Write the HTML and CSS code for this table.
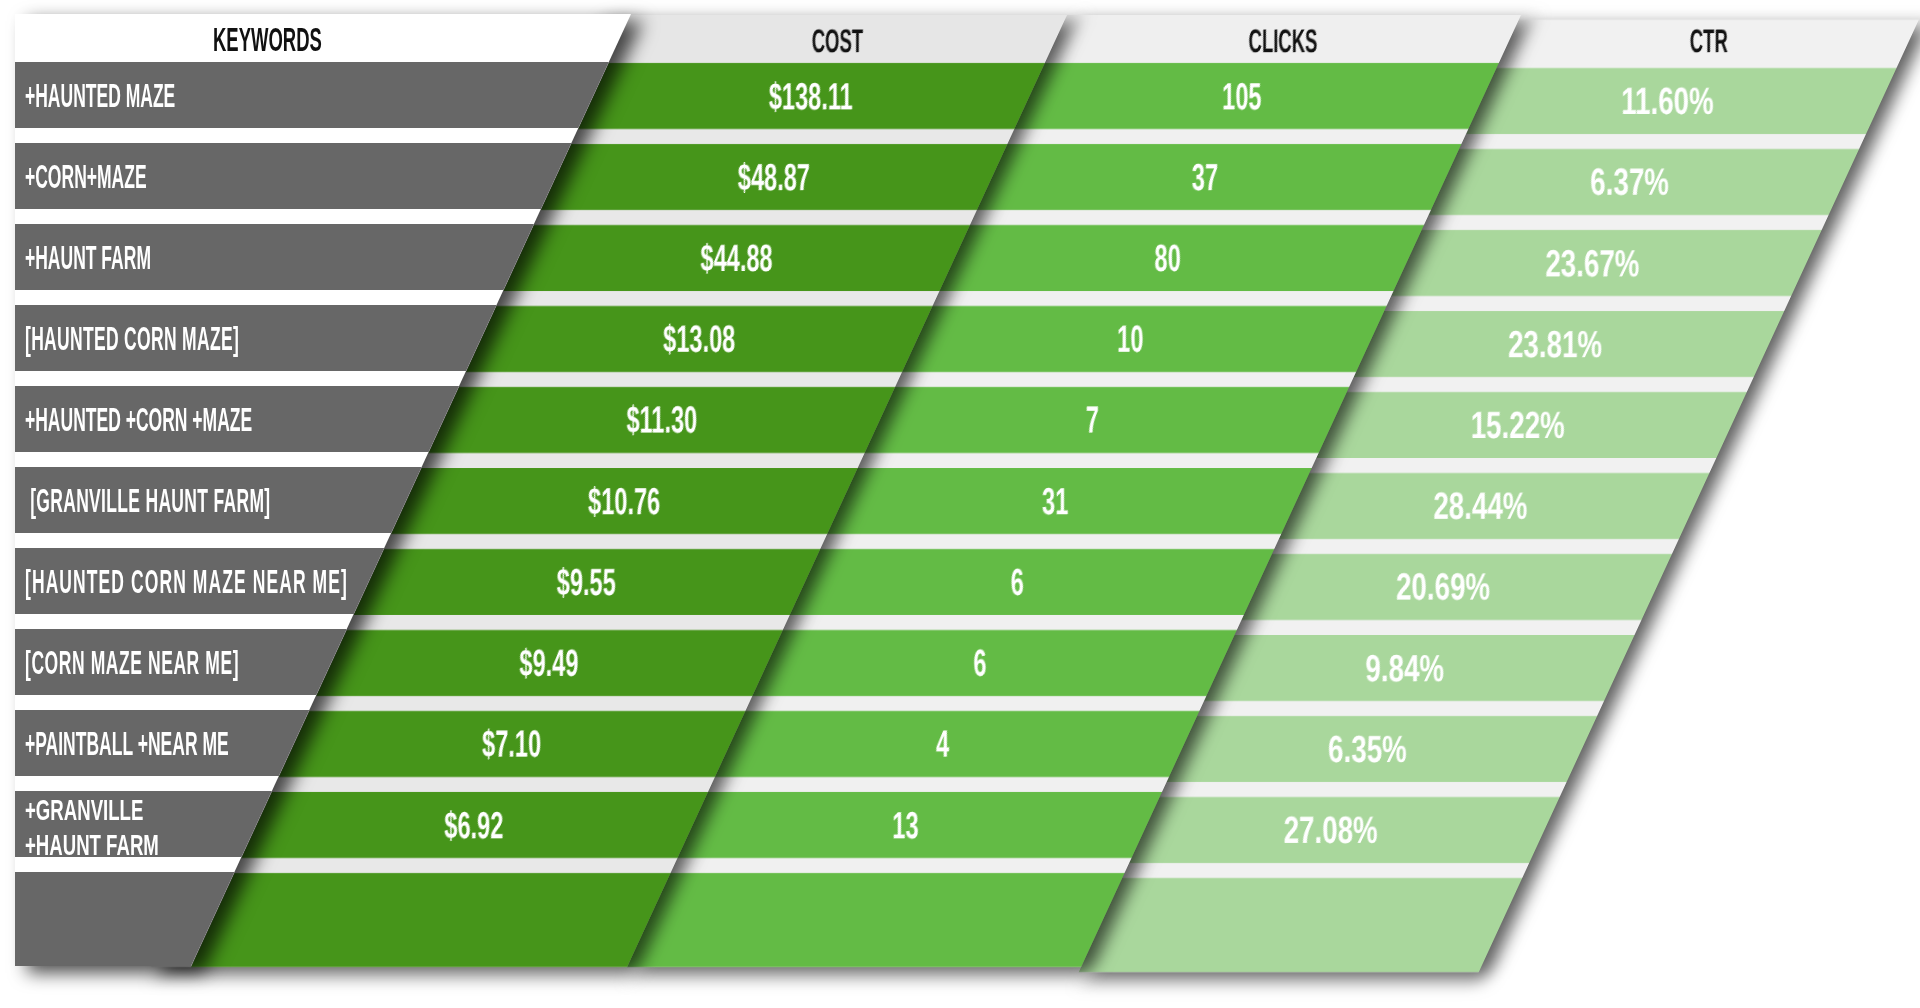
FILE: index.html
```html
<!DOCTYPE html>
<html lang="en">
<head>
<meta charset="utf-8">
<title>Keyword performance</title>
<link rel="stylesheet" href="styles.css">
</head>
<body>
<div class="board">
  <div class="kw-wrap">
    <div class="kw-col">
      <div class="kw-head"><span>KEYWORDS</span></div>
      <div class="kw-cell"><span>+HAUNTED MAZE</span></div>
      <div class="kw-cell"><span>+CORN+MAZE</span></div>
      <div class="kw-cell"><span>+HAUNT FARM</span></div>
      <div class="kw-cell track-s"><span>[HAUNTED CORN MAZE]</span></div>
      <div class="kw-cell"><span>+HAUNTED +CORN +MAZE</span></div>
      <div class="kw-cell track-s"><span>&nbsp;[GRANVILLE HAUNT FARM]</span></div>
      <div class="kw-cell track-l"><span>[HAUNTED CORN MAZE NEAR ME]</span></div>
      <div class="kw-cell track-m"><span>[CORN MAZE NEAR ME]</span></div>
      <div class="kw-cell"><span>+PAINTBALL +NEAR ME</span></div>
      <div class="kw-cell two"><span>+GRANVILLE<br>+HAUNT FARM</span></div>
      <div class="kw-cell blank"></div>
    </div>
  </div>
  <div class="greens">
    <div class="gcol cost">
      <div class="ghead"><span>COST</span></div>
      <div class="gcell"><span>$138.11</span></div>
      <div class="gcell"><span>$48.87</span></div>
      <div class="gcell"><span>$44.88</span></div>
      <div class="gcell"><span>$13.08</span></div>
      <div class="gcell"><span>$11.30</span></div>
      <div class="gcell"><span>$10.76</span></div>
      <div class="gcell"><span>$9.55</span></div>
      <div class="gcell"><span>$9.49</span></div>
      <div class="gcell"><span>$7.10</span></div>
      <div class="gcell"><span>$6.92</span></div>
      <div class="gcell blank"></div>
    </div>
    <div class="gcol clicks">
      <div class="ghead"><span>CLICKS</span></div>
      <div class="gcell"><span>105</span></div>
      <div class="gcell"><span>37</span></div>
      <div class="gcell"><span>80</span></div>
      <div class="gcell"><span>10</span></div>
      <div class="gcell"><span>7</span></div>
      <div class="gcell"><span>31</span></div>
      <div class="gcell"><span>6</span></div>
      <div class="gcell"><span>6</span></div>
      <div class="gcell"><span>4</span></div>
      <div class="gcell"><span>13</span></div>
      <div class="gcell blank"></div>
    </div>
    <div class="gcol ctr">
      <div class="ghead"><span>CTR</span></div>
      <div class="gcell"><span>11.60%</span></div>
      <div class="gcell"><span>6.37%</span></div>
      <div class="gcell"><span>23.67%</span></div>
      <div class="gcell"><span>23.81%</span></div>
      <div class="gcell"><span>15.22%</span></div>
      <div class="gcell"><span>28.44%</span></div>
      <div class="gcell"><span>20.69%</span></div>
      <div class="gcell"><span>9.84%</span></div>
      <div class="gcell"><span>6.35%</span></div>
      <div class="gcell"><span>27.08%</span></div>
      <div class="gcell blank"></div>
    </div>
  </div>
</div>
</body>
</html>
```

FILE: styles.css
```css
html, body {
  margin: 0;
  padding: 0;
  background: #ffffff;
  overflow: hidden;
}

body {
  width: 1920px;
  height: 1008px;
  font-family: "Liberation Sans", "DejaVu Sans", sans-serif;
  font-weight: 700;
}

.board {
  display: flex;
  align-items: flex-start;
  box-sizing: border-box;
  width: 1920px;
  height: 1008px;
  padding: 14px 0 0 15px;
  overflow: hidden;
}

/* ---------- keywords column ---------- */
.kw-wrap {
  flex: none;
  width: 616px;
  position: relative;
  z-index: 4;
  filter: drop-shadow(12px 7px 9px rgba(0, 0, 0, 0.7));
}

.kw-col {
  display: flex;
  flex-direction: column;
  height: 952px;
  background: #ffffff;
  clip-path: polygon(0 0, 100% 0, calc(100% - 440px) 100%, 0 100%);
}

.kw-head {
  flex: none;
  height: 48px;
  display: flex;
  align-items: center;
  padding-left: 198px;
  color: #111111;
  font-size: 33px;
}

.kw-head span,
.kw-cell span {
  display: inline-block;
  white-space: nowrap;
  transform-origin: left center;
}

.kw-head span {
  transform: scaleX(0.56);
  padding-top: 3px;
}

.kw-cell {
  flex: none;
  height: 66px;
  margin-top: 15px;
  display: flex;
  align-items: center;
  padding-left: 10px;
  background: #676767;
  color: #ffffff;
  font-size: 34px;
}

.kw-head + .kw-cell {
  margin-top: 0;
}

.kw-cell span {
  transform: scaleX(0.515);
  line-height: 36px;
}

.kw-cell.track-s span {
  letter-spacing: 0.6px;
}

.kw-cell.track-m span {
  letter-spacing: 1.1px;
}

.kw-cell.track-l span {
  letter-spacing: 2.1px;
}

.kw-cell.two {
  font-size: 30px;
}

.kw-cell.two span {
  transform: scaleX(0.62);
  line-height: 35px;
  padding-top: 6px;
}

.kw-cell.blank {
  height: 94px;
}

/* ---------- green columns (skewed) ---------- */
.greens {
  flex: none;
  display: flex;
  align-items: flex-start;
  margin-left: -40px;
  margin-top: 1px;
  transform: skewX(-24.8deg);
  transform-origin: 0 0;
}

.gcol {
  flex: none;
  display: flex;
  flex-direction: column;
  height: 952px;
  position: relative;
  filter: drop-shadow(12px 7px 9px rgba(0, 0, 0, 0.62));
}

.cost {
  width: 476px;
  padding-left: 40px;
  box-sizing: border-box;
  z-index: 3;
  background: #e8e8e8;
  --fill: #46951a;
  --head: #e6e6e6;
}

.clicks {
  width: 454px;
  z-index: 2;
  background: #f0f0f0;
  --fill: #63bb45;
  --head: #efefef;
}

.ctr {
  width: 400px;
  margin-top: 5px;
  z-index: 1;
  background: #f1f1f1;
  --fill: #a9d79c;
  --head: #f1f1f1;
}

.ghead {
  flex: none;
  height: 48px;
  display: flex;
  align-items: center;
  justify-content: center;
  background: var(--head);
  color: #111111;
  font-size: 33px;
}

.gcell {
  flex: none;
  height: 66px;
  margin-top: 15px;
  display: flex;
  align-items: center;
  justify-content: center;
  box-sizing: border-box;
  background: var(--fill);
  color: #ffffff;
  font-size: 38px;
}

.clicks .gcell,
.ctr .gcell {
  padding-right: 28px;
}

.ghead + .gcell {
  margin-top: 0;
}

.gcell.blank {
  height: 94px;
}

.ghead span,
.gcell span {
  display: inline-block;
  white-space: nowrap;
}

.ghead span {
  transform: skewX(24.8deg) scaleX(0.56);
  padding-top: 3px;
}

.ctr .ghead span {
  padding-top: 0;
  margin-bottom: 6px;
}

.gcell span {
  transform: skewX(24.8deg) scaleX(0.62);
}

.ctr .gcell span {
  transform: skewX(24.8deg) scaleX(0.73);
}
```
